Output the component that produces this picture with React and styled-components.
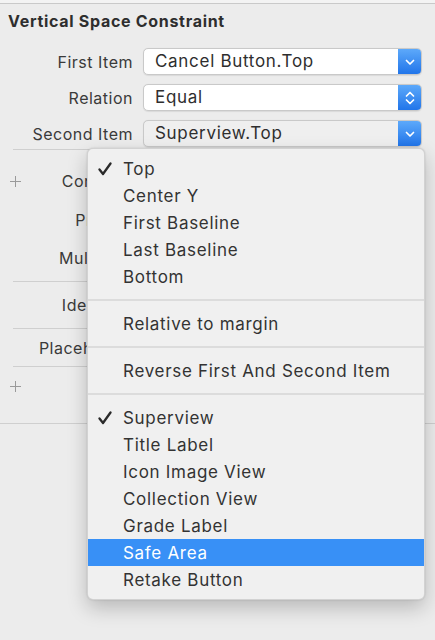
import React from "react";
import styled, { createGlobalStyle } from "styled-components";

const Global = createGlobalStyle`
  html, body { margin: 0; padding: 0; background: #ececec; }
  body { font-family: Inter, "Noto Sans", "Liberation Sans", sans-serif; color: #333; -webkit-font-smoothing: antialiased; }
`;

const Page = styled.div`
  position: relative;
  width: 435px;
  height: 640px;
  overflow: hidden;
  background: #ececec;
`;

const TopRule = styled.div`
  height: 3px;
  background: #f3f3f3;
  border-bottom: 1px solid #c9c9c9;
`;

const Title = styled.div`
  margin: 7px 0 0 8px;
  height: 20px;
  line-height: 20px;
  font-size: 16px;
  font-weight: 700;
  color: #2e2e2e;
  letter-spacing: 0.7px;
`;

const Form = styled.div`
  display: grid;
  grid-template-columns: 133px 279px;
  column-gap: 10px;
  row-gap: 9px;
  margin-top: 17px;
  align-items: center;
`;

const Label = styled.div`
  text-align: right;
  font-size: 16px;
  letter-spacing: 0.5px;
  color: #3a3a3a;
  white-space: nowrap;
`;

const Popup = styled.div`
  display: flex;
  height: 27px;
  box-sizing: border-box;
  border: 1px solid #c9c9c9;
  border-radius: 5px;
  background: ${(p) => (p.$open ? "#efefef" : "#ffffff")};
  overflow: hidden;
  box-shadow: 0 0.5px 1px rgba(0,0,0,0.08);
`;

const PopupText = styled.div`
  flex: 1;
  padding-left: 11px;
  line-height: 25px;
  font-size: 17px;
  letter-spacing: 0.7px;
  color: #2e2e2e;
  white-space: nowrap;
`;

const Arrow = styled.div`
  width: 24px;
  display: flex;
  align-items: center;
  justify-content: center;
  background: linear-gradient(#5fabfb, #1f73e9);
  margin: -1px -1px -1px 0;
`;

const Section = styled.div`
  margin-top: 2px;
`;

const Divider = styled.div`
  height: 1px;
  background: #cfcfcf;
  margin: ${(p) => p.$mt || 0}px ${(p) => (p.$full ? 0 : 13)}px 0 ${(p) => (p.$full ? 0 : 13)}px;
`;

const FieldRow = styled.div`
  display: flex;
  align-items: center;
  height: 26px;
  margin-top: ${(p) => p.$mt}px;
`;

/* The visible part of a row: the rest lies under the open menu */
const RowClip = styled.div`
  display: flex;
  align-items: center;
  width: 87px;
  height: 100%;
  overflow: hidden;
`;

const PlusSlot = styled.div`
  flex: none;
  width: 28px;
  padding-left: 10px;
  box-sizing: border-box;
  display: flex;
  align-items: center;
`;

const FieldLabel = styled.div`
  flex: none;
  width: ${(p) => p.$w}px;
  text-align: right;
  font-size: 16px;
  letter-spacing: 0.5px;
  color: #3a3a3a;
  white-space: nowrap;
`;

const Menu = styled.div`
  position: absolute;
  left: 87px;
  top: 148px;
  width: 338px;
  box-sizing: border-box;
  padding: 6px 0 6px;
  background: #f0f0f0;
  border-radius: 6px;
  border: 0.5px solid rgba(0,0,0,0.12);
  box-shadow: 0 8px 20px rgba(0,0,0,0.22), 0 0 2px rgba(0,0,0,0.15);
`;

const Item = styled.div`
  display: flex;
  align-items: center;
  height: 27px;
  background: ${(p) => (p.$hl ? "#3890f6" : "transparent")};
  color: ${(p) => (p.$hl ? "#ffffff" : "#333333")};
  font-size: 17px;
  letter-spacing: 0.7px;
  white-space: nowrap;
`;

const Check = styled.div`
  width: 35px;
  padding-left: 10px;
  box-sizing: border-box;
  display: flex;
  align-items: center;
`;

const Sep = styled.div`
  height: 20px;
  display: flex;
  align-items: center;
  &::after {
    content: "";
    flex: 1;
    height: 2px;
    background: #dcdcdc;
  }
`;

const Chevron = ({ double }) =>
  double ? (
    <svg width="12" height="18" viewBox="0 0 12 18">
      <path d="M2.5 7 L6 3.5 L9.5 7" fill="none" stroke="#fff" strokeWidth="1.7" strokeLinecap="round" strokeLinejoin="round" />
      <path d="M2.5 11 L6 14.5 L9.5 11" fill="none" stroke="#fff" strokeWidth="1.7" strokeLinecap="round" strokeLinejoin="round" />
    </svg>
  ) : (
    <svg width="12" height="10" viewBox="0 0 12 10">
      <path d="M2.5 3.5 L6 7 L9.5 3.5" fill="none" stroke="#fff" strokeWidth="1.7" strokeLinecap="round" strokeLinejoin="round" />
    </svg>
  );

const Plus = () => (
  <svg width="11" height="11" viewBox="0 0 11 11">
    <path d="M5.5 0 V11 M0 5.5 H11" stroke="#9a9a9a" strokeWidth="1" />
  </svg>
);

const CheckMark = () => (
  <svg width="14" height="14" viewBox="0 0 14 14">
    <path d="M1.5 7.5 L5 12 L12.5 1.5" fill="none" stroke="#2a2a2a" strokeWidth="2.3" strokeLinecap="round" strokeLinejoin="round" />
  </svg>
);

const menuGroups = [
  [{ t: "Top", c: true }, { t: "Center Y" }, { t: "First Baseline" }, { t: "Last Baseline" }, { t: "Bottom" }],
  [{ t: "Relative to margin" }],
  [{ t: "Reverse First And Second Item" }],
  [
    { t: "Superview", c: true },
    { t: "Title Label" },
    { t: "Icon Image View" },
    { t: "Collection View" },
    { t: "Grade Label" },
    { t: "Safe Area", h: true },
    { t: "Retake Button" },
  ],
];

const fields = [
  { label: "Constant", mt: 18, plus: true },
  { label: "Priority", mt: 13 },
  { label: "Multiplier", mt: 12, divider: 10 },
  { label: "Identifier", mt: 10, divider: 10 },
  { label: "Placeholder", mt: 6, divider: 5 },
];

export default function App() {
  return (
    <Page>
      <Global />
      <TopRule />
      <Title>Vertical Space Constraint</Title>
      <Form>
        <Label>First Item</Label>
        <Popup>
          <PopupText>Cancel Button.Top</PopupText>
          <Arrow><Chevron /></Arrow>
        </Popup>
        <Label>Relation</Label>
        <Popup>
          <PopupText>Equal</PopupText>
          <Arrow><Chevron double /></Arrow>
        </Popup>
        <Label>Second Item</Label>
        <Popup $open>
          <PopupText>Superview.Top</PopupText>
          <Arrow><Chevron /></Arrow>
        </Popup>
      </Form>
      <Section>
        <Divider />
        {fields.map((f) => (
          <React.Fragment key={f.label}>
            <FieldRow $mt={f.mt}>
              <RowClip>
                <PlusSlot>{f.plus && <Plus />}</PlusSlot>
                <FieldLabel $w={106}>{f.label}</FieldLabel>
              </RowClip>
            </FieldRow>
            {f.divider && <Divider $mt={f.divider} />}
          </React.Fragment>
        ))}
        <FieldRow $mt={6}>
          <PlusSlot><Plus /></PlusSlot>
        </FieldRow>
        <Divider $mt={24} $full />
      </Section>
      <Menu>
        {menuGroups.map((g, gi) => (
          <React.Fragment key={gi}>
            {gi > 0 && <Sep />}
            {g.map((it) => (
              <Item key={it.t} $hl={it.h}>
                <Check>{it.c && <CheckMark />}</Check>
                {it.t}
              </Item>
            ))}
          </React.Fragment>
        ))}
      </Menu>
    </Page>
  );
}
